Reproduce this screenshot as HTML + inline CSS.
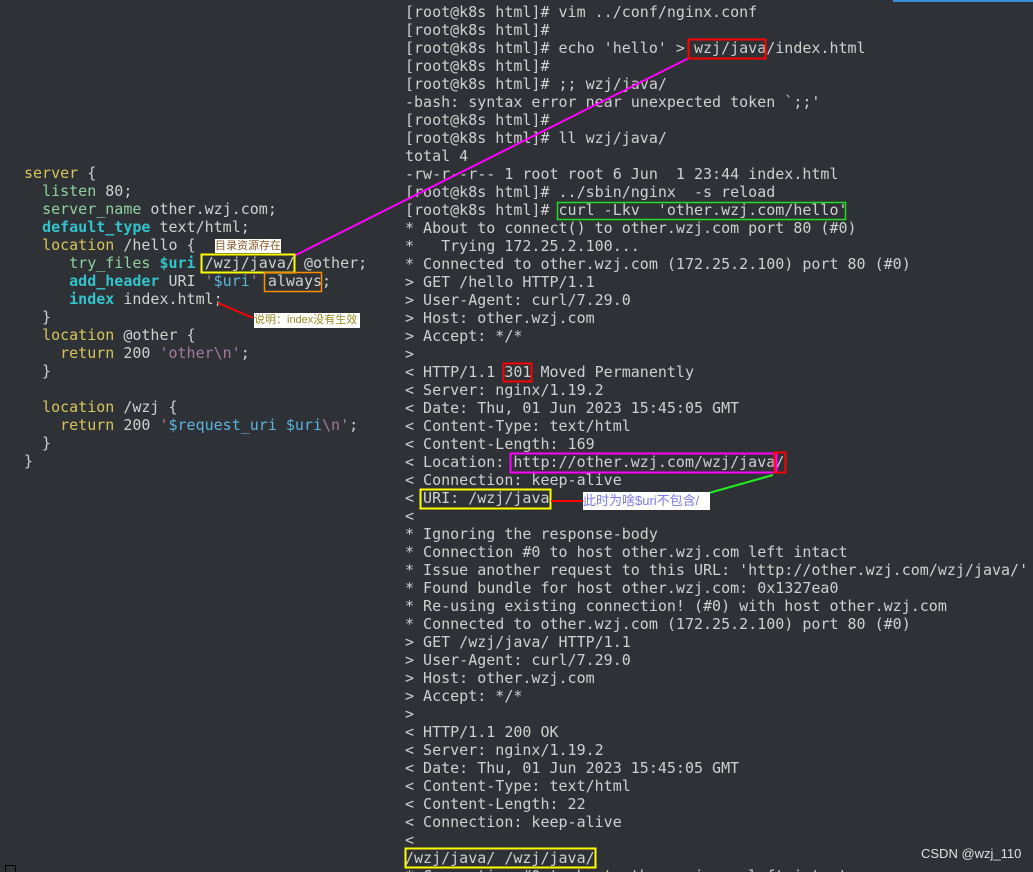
<!DOCTYPE html>
<html><head><meta charset="utf-8"><style>
html,body{margin:0;padding:0;background:#2e3236;width:1033px;height:872px;overflow:hidden;position:relative}
pre{position:absolute;margin:0;font-family:"DejaVu Sans Mono","Liberation Mono",monospace;font-size:15px;line-height:18px;color:#cfd0cf;white-space:pre}
.y{color:#d8c45a}.g{color:#8fd19e}.c{color:#33c3cc;font-weight:bold}.p{color:#a47a9c}.b{color:#5cb2dc}
.lbl{position:absolute;background:#fff;font-family:"Liberation Sans","Noto Sans CJK SC",sans-serif;white-space:nowrap}
</style></head><body>
<div style="position:absolute;left:893px;top:0;width:140px;height:2px;background:#3b8fd9"></div>
<pre style="left:24px;top:164px"><span class="y">server</span> {
  <span class="g">listen</span> 80;
  <span class="g">server_name</span> other.wzj.com;
  <span class="c">default_type</span> text/html;
  <span class="y">location</span> /hello {
     <span class="g">try_files</span> <span class="c">$uri</span> /wzj/java/ @other;
     <span class="c">add_header</span> URI <span class="p">'</span><span class="b">$uri</span><span class="p">'</span> always;
     <span class="c">index</span> index.html;
  }
  <span class="y">location</span> @other {
    <span class="y">return</span> 200 <span class="p">'other\n'</span>;
  }

  <span class="y">location</span> /wzj {
    <span class="y">return</span> 200 <span class="p">'</span><span class="b">$request_uri $uri</span><span class="p">\n'</span>;
  }
}</pre>
<pre style="left:405px;top:3px">[root@k8s html]# vim ../conf/nginx.conf
[root@k8s html]#
[root@k8s html]# echo 'hello' > wzj/java/index.html
[root@k8s html]#
[root@k8s html]# ;; wzj/java/
-bash: syntax error near unexpected token `;;'
[root@k8s html]#
[root@k8s html]# ll wzj/java/
total 4
-rw-r--r-- 1 root root 6 Jun  1 23:44 index.html
[root@k8s html]# ../sbin/nginx  -s reload
[root@k8s html]# curl -Lkv  'other.wzj.com/hello'
* About to connect() to other.wzj.com port 80 (#0)
*   Trying 172.25.2.100...
* Connected to other.wzj.com (172.25.2.100) port 80 (#0)
&gt; GET /hello HTTP/1.1
&gt; User-Agent: curl/7.29.0
&gt; Host: other.wzj.com
&gt; Accept: */*
&gt;
&lt; HTTP/1.1 301 Moved Permanently
&lt; Server: nginx/1.19.2
&lt; Date: Thu, 01 Jun 2023 15:45:05 GMT
&lt; Content-Type: text/html
&lt; Content-Length: 169
&lt; Location: http://other.wzj.com/wzj/java/
&lt; Connection: keep-alive
&lt; URI: /wzj/java
&lt;
* Ignoring the response-body
* Connection #0 to host other.wzj.com left intact
* Issue another request to this URL: 'http://other.wzj.com/wzj/java/'
* Found bundle for host other.wzj.com: 0x1327ea0
* Re-using existing connection! (#0) with host other.wzj.com
* Connected to other.wzj.com (172.25.2.100) port 80 (#0)
&gt; GET /wzj/java/ HTTP/1.1
&gt; User-Agent: curl/7.29.0
&gt; Host: other.wzj.com
&gt; Accept: */*
&gt;
&lt; HTTP/1.1 200 OK
&lt; Server: nginx/1.19.2
&lt; Date: Thu, 01 Jun 2023 15:45:05 GMT
&lt; Content-Type: text/html
&lt; Content-Length: 22
&lt; Connection: keep-alive
&lt;
/wzj/java/ /wzj/java/
* Connection #0 to host other.wzj.com left intact</pre>
<svg width="1033" height="872" style="position:absolute;left:0;top:0" xmlns="http://www.w3.org/2000/svg" fill="none">
<line x1="294" y1="256" x2="689" y2="58" stroke="#ff00ff" stroke-width="2"/>
<rect x="201.5" y="254.5" width="93" height="18" stroke="#ffff00" stroke-width="2"/>
<rect x="264.5" y="272.5" width="57" height="19" stroke="#ff8c00" stroke-width="1.5"/>
<line x1="218" y1="303" x2="253" y2="318" stroke="#ff0000" stroke-width="2"/>
<rect x="688.5" y="39.5" width="77" height="19" stroke="#ff0000" stroke-width="2"/>
<rect x="557.5" y="202.5" width="288" height="17" stroke="#22dd22" stroke-width="1.5"/>
<rect x="503.5" y="363.5" width="28" height="18" stroke="#ff0000" stroke-width="2"/>
<rect x="510.5" y="453.5" width="266" height="19" stroke="#ff00ff" stroke-width="2"/>
<rect x="774.5" y="452.5" width="11" height="20" stroke="#ff0000" stroke-width="2"/>
<line x1="773" y1="475" x2="709" y2="493" stroke="#22ee22" stroke-width="2"/>
<rect x="420.5" y="489.5" width="130" height="19" stroke="#ffff00" stroke-width="2"/>
<line x1="551" y1="501" x2="583" y2="501" stroke="#ff0000" stroke-width="2"/>
<rect x="405.5" y="848.5" width="190" height="19" stroke="#ffff00" stroke-width="2"/>
<rect x="5.5" y="865.5" width="10" height="10" stroke="#000" stroke-width="1"/>
</svg>
<div class="lbl" style="left:215px;top:239px;width:66px;height:14px;font-size:11px;line-height:14px;color:#8b5a2b">目录资源存在</div>
<div class="lbl" style="left:254px;top:313px;width:106px;height:15px;font-size:11px;line-height:15px;color:#9a8a20">说明：index没有生效</div>
<div class="lbl" style="left:583px;top:492px;width:127px;height:18px;font-size:13px;line-height:18px;color:#7b7bf0">此时为啥$uri不包含/</div>
<div style="position:absolute;left:921px;top:846px;font-family:'Liberation Sans',sans-serif;font-size:13px;color:#e0e0e0">CSDN @wzj_110</div>
</body></html>
